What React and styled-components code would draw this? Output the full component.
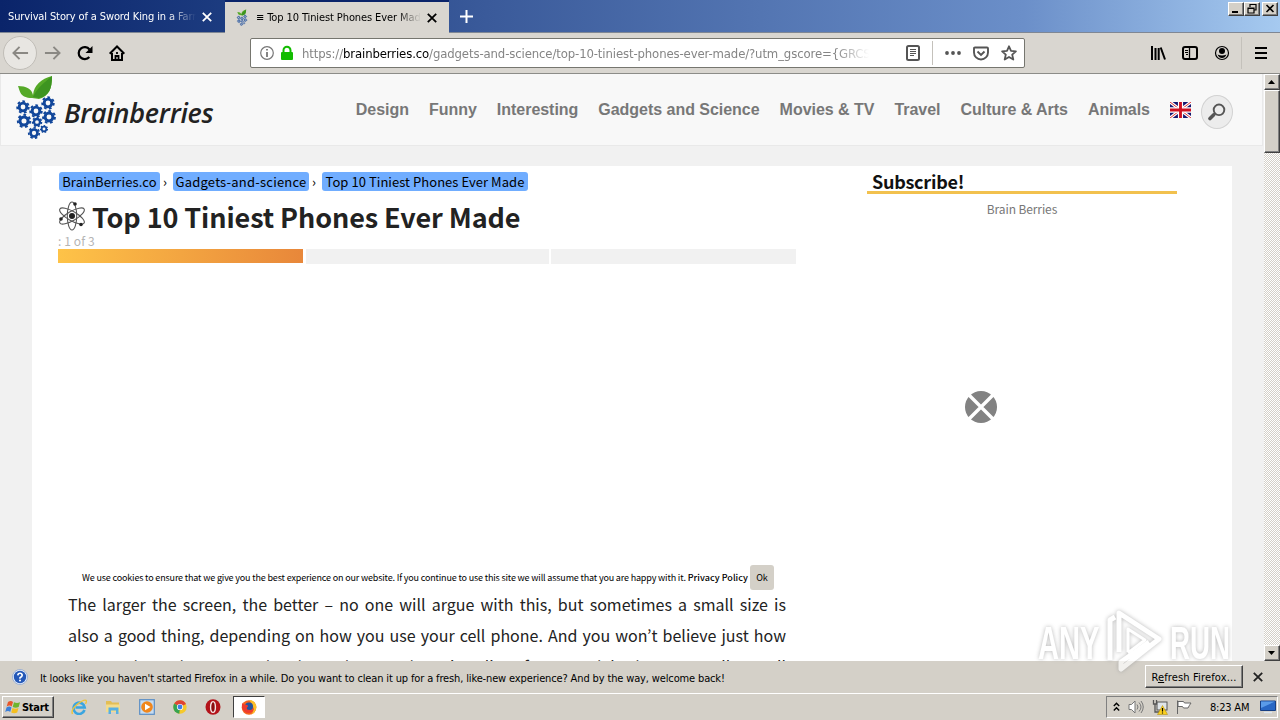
import React from "react";
import styled, { createGlobalStyle, css } from "styled-components";

const ui = '"DejaVu Sans Condensed", "DejaVu Sans", Tahoma, sans-serif';
const body = '"Noto Sans CJK JP", "Noto Sans", sans-serif';

const Global = createGlobalStyle`
  * { box-sizing: border-box; }
  html, body { margin: 0; padding: 0; overflow: hidden; }
  svg { display: block; flex: none; }
`;

const Screen = styled.div`
  position: relative;
  width: 1280px;
  height: 720px;
  display: flex;
  flex-direction: column;
  overflow: hidden;
  background: #f1f1f1;
  font-family: ${ui};
  color: #000;
`;

const Line = styled.span`
  white-space: nowrap;
  font-size: ${(p) => p.$size}px;
  letter-spacing: ${(p) => p.$track || 0}px;
`;

/* ---------- browser chrome ---------- */

const TitleBar = styled.div`
  height: 33px;
  flex: none;
  display: flex;
  align-items: stretch;
  border-bottom: 1px solid #7f8794;
  background: linear-gradient(90deg, #0a246a 0%, #1f3f83 20%, #3a5a9a 38%, #6b8fc9 80%, #a6caf0 100%);
`;

const Tab = styled.div`
  width: ${(p) => p.$width}px;
  display: flex;
  align-items: center;
  padding: 1px 13px 0 8px;
  color: #fff;
  ${(p) =>
    p.$active &&
    css`
      height: 33px;
      padding: 0 12px 0 10px;
      border-top: 2px solid #0a246a;
      background: #d9d6d0;
      color: #000;
    `}
`;

const TabLabel = styled.div`
  flex: 1;
  overflow: hidden;
  display: flex;
  margin-left: ${(p) => p.$indent || 0}px;
  margin-right: 6px;
  mask-image: linear-gradient(90deg, #000 85%, transparent 100%);
`;

const NewTab = styled.div`
  flex: 1;
  display: flex;
  align-items: center;
  padding-left: 10px;
`;

const WindowButtons = styled.div`
  display: flex;
  align-items: flex-start;
  padding: 2px 2px 0 0;
`;

const raised = css`
  border: 1px solid;
  border-color: #fff #404040 #404040 #fff;
  box-shadow: inset -1px -1px 0 #808080;
  background: #d4d0c8;
`;

const WinButton = styled.div`
  width: 16px;
  height: 14px;
  margin-left: ${(p) => p.$gap || 0}px;
  ${raised}
`;

const ToolBar = styled.div`
  height: 41px;
  flex: none;
  display: flex;
  align-items: center;
  padding: 0 13px 0 3px;
  border-bottom: 1px solid #8c8c88;
  background: #d9d6d0;
`;

const BackButton = styled.div`
  width: 34px;
  height: 34px;
  display: grid;
  place-items: center;
  border: 1px solid #c0bdb7;
  border-radius: 50%;
  background: #e8e6e2;
`;

const NavIcons = styled.div`
  display: flex;
  align-items: center;
  gap: 16px;
  width: 213px;
  padding-left: 7px;
`;

const UrlBar = styled.div`
  width: 775px;
  height: 30px;
  display: flex;
  align-items: center;
  padding: 0 5px 0 8px;
  border: 1px solid #76766f;
  border-radius: 2px;
  background: #fff;
`;

const UrlText = styled.div`
  width: 567px;
  margin: 0 37px 0 8px;
  overflow: hidden;
  display: flex;
  color: #858585;
  mask-image: linear-gradient(90deg, #000 94%, transparent 100%);
  b { font-weight: normal; color: #000; }
`;

const UrlActions = styled.div`
  display: flex;
  align-items: center;
  gap: 12px;
`;

const Rule = styled.div`
  width: 1px;
  height: ${(p) => p.$height}px;
  background: #c4c1bb;
`;

const RightTools = styled.div`
  margin-left: auto;
  display: flex;
  align-items: center;
  gap: 16px;
`;

const MenuTool = styled.div`
  margin-left: -5px;
  display: flex;
  align-items: center;
  gap: 13px;
`;

/* ---------- site ---------- */

const Viewport = styled.div`
  height: 587px;
  flex: none;
  display: flex;
  overflow: hidden;
`;

const Site = styled.div`
  width: 1264px;
  height: 587px;
  overflow: hidden;
  font-family: ${body};
`;

const SiteHeader = styled.header`
  width: 1263px;
  height: 72px;
  display: flex;
  align-items: center;
  padding: 0 29px 0 14px;
  border: 1px solid #e9e9e9;
  border-top: 0;
  background: #f8f8f8;
`;

const Brand = styled.div`
  display: flex;
  align-items: center;
  gap: 7px;
  margin-top: -5px;
  span {
    margin-top: 12px;
    font: italic 600 27px/32px "Open Sans", sans-serif;
    letter-spacing: -0.25px;
    color: #222;
  }
`;

const SiteNav = styled.nav`
  margin-left: auto;
  display: flex;
  align-items: center;
  gap: 20px;
  padding-top: 1px;
  font: bold 16px/20px "Liberation Sans", Arial, sans-serif;
  letter-spacing: -0.03px;
  color: #777;
  white-space: nowrap;
`;

const SearchButton = styled.div`
  width: 32px;
  height: 34px;
  margin-left: -10px;
  margin-top: 3px;
  display: grid;
  place-items: center;
  border: 1px solid #d2d2d2;
  border-radius: 50%;
  background: #ececec;
`;

const Sheet = styled.div`
  width: 1200px;
  height: 530px;
  margin: 20px 0 0 32px;
  display: flex;
  background: #fff;
`;

const Article = styled.main`
  width: 809px;
  padding: 6px 0 0 26px;
`;

const Crumbs = styled.div`
  display: flex;
  align-items: center;
  height: 19px;
  padding-left: 1px;
  font-size: 13px;
  line-height: 19px;
  letter-spacing: 0.08px;
  white-space: nowrap;
`;

const Crumb = styled.span`
  width: ${(p) => p.$width}px;
  height: 19px;
  line-height: 20px;
  text-align: center;
  border-radius: 3px;
  background: #70adff;
  letter-spacing: ${(p) => p.$track || 0}px;
`;

const CrumbArrow = styled.span`
  width: 13px;
  padding-left: 3px;
`;

const Title = styled.h1`
  display: flex;
  align-items: center;
  gap: 6px;
  height: 36px;
  margin: 7px 0 0;
  font-size: 27px;
  font-weight: 700;
  line-height: 36px;
  letter-spacing: -0.1px;
  color: #222;
  white-space: nowrap;
  span { padding-top: 2px; }
`;

const Counter = styled.div`
  height: 15px;
  font-size: 12px;
  line-height: 14px;
  letter-spacing: 0.1px;
  color: #b5b5b5;
`;

const Progress = styled.div`
  display: grid;
  grid-template-columns: 245px 243px 245px;
  column-gap: 2.5px;
  width: 738px;
  height: 15px;
`;

const Step = styled.div`
  height: ${(p) => (p.$done ? 14 : 15)}px;
  background: ${(p) => (p.$done ? "linear-gradient(90deg, #fec348, #e8873a)" : "#f1f1f1")};
`;

const Cookie = styled.div`
  display: flex;
  align-items: center;
  height: 25px;
  margin: 301px 0 0 24px;
  font-size: 9px;
  white-space: nowrap;
  b { font-weight: 500; letter-spacing: 0.05px; }
`;

const OkButton = styled.span`
  width: 24px;
  height: 25px;
  margin-left: 2px;
  line-height: 25px;
  text-align: center;
  border-radius: 3px;
  background: #d4d0c8;
`;

const Copy = styled.div`
  width: 718px;
  margin: -1px 0 0 10px;
  color: #222;
  font-size: 16px;
  line-height: 31px;
`;

const CopyLine = styled.div`
  height: 31px;
  white-space: nowrap;
  text-align: justify;
  text-align-last: justify;
`;

const Sidebar = styled.aside`
  width: 340px;
  padding: 5px 0 0 26px;
`;

const SideTitle = styled.h2`
  width: 310px;
  height: 23px;
  margin: 0;
  padding-left: 5px;
  border-bottom: 3px solid #f2c14e;
  font-size: 18px;
  line-height: 21px;
  letter-spacing: -0.25px;
  color: #111;
`;

const SideText = styled.div`
  width: 310px;
  margin-top: 6px;
  text-align: center;
  font-size: 12px;
  line-height: 17px;
  height: 18px;
  letter-spacing: -0.1px;
  color: #777;
`;

const Blocked = styled.div`
  margin: 173px 0 0 98px;
`;

/* ---------- scroll bar ---------- */

const ScrollBar = styled.div`
  width: 16px;
  display: flex;
  flex-direction: column;
  background: repeating-conic-gradient(#d4d0c8 0 25%, #fff 0 50%) 0 0 / 2px 2px;
`;

const ScrollButton = styled.div`
  height: 16px;
  display: grid;
  place-items: center;
  margin-top: ${(p) => (p.$end ? "auto" : 0)};
  ${raised}
`;

const Thumb = styled.div`
  height: 63px;
  ${raised}
`;

/* ---------- bottom bars ---------- */

const Notice = styled.div`
  height: 32px;
  flex: none;
  display: flex;
  align-items: center;
  padding: 0 17px 0 12px;
  background: #d4d0c8;
`;

const NoticeText = styled.div`
  flex: 1;
  padding: 0 0 2px 12px;
`;

const RefreshButton = styled.button`
  width: 98px;
  height: 23px;
  margin: 0 10px 2px 0;
  padding: 0;
  font-family: ${ui};
  ${raised}
`;

const TaskBar = styled.div`
  height: 27px;
  flex: none;
  display: flex;
  align-items: center;
  padding: 0 2px;
  border-top: 1px solid #fff;
  background: #d4d0c8;
`;

const StartButton = styled.div`
  width: 52px;
  height: 22px;
  display: flex;
  align-items: center;
  gap: 1px;
  padding-left: 2px;
  font-weight: bold;
  ${raised}
`;

const QuickLaunch = styled.div`
  display: flex;
  align-items: center;
  gap: 18px;
  margin-left: 17px;
`;

const ActiveTask = styled.div`
  width: 32px;
  height: 22px;
  margin-left: 12px;
  display: grid;
  place-items: center;
  border: 1px solid;
  border-color: #404040 #fff #fff #404040;
  background: #fff;
`;

const Tray = styled.div`
  width: 172px;
  height: 22px;
  margin-left: auto;
  display: flex;
  align-items: center;
  padding: 0 1px 0 6px;
  border: 1px solid;
  border-color: #808080 #fff #fff #808080;
`;

const TrayIcons = styled.div`
  display: flex;
  align-items: center;
  gap: 8px;
  width: 97px;
`;

const Watermark = styled.div`
  position: absolute;
  left: 1038px;
  top: 607px;
  width: 194px;
  height: 68px;
  display: flex;
  align-items: center;
  justify-content: space-between;
  opacity: 0.7;
  filter: drop-shadow(0 0 2px #999);
`;

const WatermarkWord = styled.span`
  display: block;
  width: 62px;
  margin-top: 4px;
  font: bold 47px/44px "Liberation Sans", Arial, sans-serif;
  color: #fff;
  transform: scaleX(${(p) => p.$stretch});
  transform-origin: 0 50%;
`;

/* ---------- drawings ---------- */

const Cross = ({ size = 10, color, w = 2 }) => (
  <svg width={size} height={size} viewBox="0 0 10 10" stroke={color} strokeWidth={w} fill="none">
    <path d="M.8.8 9.2 9.2M9.2.8.8 9.2" />
  </svg>
);

const gears = [
  [8, 33, 6.6], [21, 37, 6.6], [33, 29, 6.6], [9, 47, 7], [34, 43, 6.8], [22, 48, 5.2], [29, 55, 4], [19, 59, 6],
];

const Berry = ({ w, h }) => (
  <svg width={w} height={h} viewBox="0 0 42 66">
    <path d="M17 24C5 24 5 17 3 12c8 0 14 3 15 9 1-10 8-16 19-19 0 13-3 20-13 23z" fill="#55a928" />
    <path d="M18 23C22 14 29 9 37 2c0 13-3 20-13 22z" fill="#3d9420" />
    {gears.map(([x, y, r]) => (
      <g key={x + "-" + y} fill="none" stroke="#12479b">
        <circle cx={x} cy={y} r={r * 0.58} strokeWidth={r * 0.44} />
        <circle cx={x} cy={y} r={r * 0.88} strokeWidth={r * 0.28} strokeDasharray={`${r * 0.395} ${r * 0.395}`} />
      </g>
    ))}
  </svg>
);

const Arrow = ({ flip }) => (
  <svg width="17" height="16" viewBox="0 0 18 16" fill="none" stroke="#8a8883" strokeWidth="2">
    <path d={flip ? "M1 8h15M10 1.5 16.500 8 10 14.500" : "M17 8H2M8 1.500 1.500 8 8 14.500"} />
  </svg>
);

const Reload = () => (
  <svg width="16" height="16" viewBox="0 0 16 16">
    <path d="M12.300 12A6 6 0 1 1 12.500 4.500" fill="none" stroke="#000" strokeWidth="2.200" />
    <path d="M15.500 1v7h-7z" fill="#000" />
  </svg>
);

const Home = () => (
  <svg width="16" height="16" viewBox="0 0 16 16" fill="none" stroke="#000" strokeWidth="2">
    <path d="M.7 8.700 8 1.500l7.300 7.200M3 8v7h10V8" />
    <path d="M6.500 15v-4h3v4M8 7v2" strokeWidth="1.800" />
  </svg>
);

const InfoLock = () => (
  <svg width="35" height="16" viewBox="0 0 35 16">
    <circle cx="8" cy="8" r="6.300" fill="none" stroke="#777" strokeWidth="1.200" />
    <path d="M7.200 4h1.600v1.500H7.200zM7.200 7h1.600v5H7.200z" fill="#666" />
    <path d="M24.500 8V5.200a3.500 3.500 0 0 1 7 0V8" fill="none" stroke="#12bc00" strokeWidth="2" />
    <rect x="22" y="7" width="12" height="8" rx="1" fill="#12bc00" />
  </svg>
);

const Reader = () => (
  <svg width="14" height="16" viewBox="0 0 14 16" fill="none" stroke="#555">
    <rect x="1" y="1" width="12" height="14" rx="1.500" strokeWidth="2" />
    <path d="M4 4.500h6M4 6.500h6M4 8.500h6M4 10.500h4" />
  </svg>
);

const Dots = () => (
  <svg width="16" height="4" viewBox="0 0 16 4" fill="#555">
    <circle cx="2" cy="2" r="1.900" /><circle cx="8" cy="2" r="1.900" /><circle cx="14" cy="2" r="1.900" />
  </svg>
);

const Pocket = () => (
  <svg width="16" height="15" viewBox="0 0 16 15" fill="none" stroke="#555" strokeWidth="1.900">
    <path d="M2 1.500h12q1 0 1 1V6.500a7 7 0 0 1-14 0V2.500q0-1 1-1z" />
    <path d="M4.500 5.500 8 9l3.500-3.500" />
  </svg>
);

const Star = () => (
  <svg width="16" height="16" viewBox="0 0 16 16" fill="none" stroke="#555" strokeWidth="1.800" strokeLinejoin="round">
    <path d="m8 1.300 2 4.500 4.900.5-3.700 3.300 1.100 4.900L8 12l-4.300 2.500 1.100-4.900L1.100 6.300 6 5.800z" />
  </svg>
);

const Library = () => (
  <svg width="16" height="16" viewBox="0 0 16 16" stroke="#000" strokeWidth="2">
    <path d="M2 1v14M5.500 3v12M8.700 3v12M10.700 2.500 15 14.500" />
  </svg>
);

const Panels = () => (
  <svg width="16" height="16" viewBox="0 0 16 16" fill="none" stroke="#000">
    <rect x="1" y="2" width="14" height="12" rx="2" strokeWidth="2" />
    <path d="M7.500 2v12" strokeWidth="1.300" /><path d="M3 5.500h3M3 7.500h3M4 9.500h2" />
  </svg>
);

const Account = () => (
  <svg width="16" height="16" viewBox="0 0 16 16">
    <circle cx="8" cy="8" r="6.500" fill="none" stroke="#000" strokeWidth="1.200" />
    <circle cx="8" cy="6" r="3" /><path d="M3.500 9.500Q8 11.500 12.500 9.500 11 13 8 13T3.500 9.500z" />
  </svg>
);

const Menu = () => (
  <svg width="12" height="12" viewBox="0 0 12 12" stroke="#000" strokeWidth="2">
    <path d="M0 1h12M0 6h12M0 11h12" />
  </svg>
);

const Flag = () => (
  <svg width="21" height="16" viewBox="0 0 22 16" preserveAspectRatio="none">
    <rect width="22" height="16" fill="#16166f" />
    <path d="M0 0l22 16M22 0 0 16" stroke="#fff" strokeWidth="3.200" />
    <path d="M0 0l22 16M22 0 0 16" stroke="#d33" strokeWidth="1" />
    <path d="M11 0v16M0 8h22" stroke="#fff" strokeWidth="5.400" />
    <path d="M11 0v16M0 8h22" stroke="#cf1020" strokeWidth="3" />
  </svg>
);

const Magnifier = () => (
  <svg width="18" height="18" viewBox="0 0 18 18" fill="none" stroke="#555">
    <circle cx="11" cy="6.800" r="5.300" strokeWidth="1.900" />
    <path d="M7 10.500 5.500 12" strokeWidth="2" /><path d="M5.500 12 2 15.500" strokeWidth="3.600" strokeLinecap="round" />
  </svg>
);

const Atom = () => (
  <svg width="28" height="30" viewBox="0 0 28 30" fill="none" stroke="#555" strokeWidth="1.100">
    {[0, 60, 120].map((a) => (
      <ellipse key={a} cx="14" cy="15" rx="4.700" ry="14" transform={`rotate(${a} 14 15)`} />
    ))}
    <g fill="#222" stroke="none">
      <circle cx="14" cy="15" r="3" /><circle cx="17" cy="3" r="1.800" />
      <circle cx="3" cy="18" r="1.800" /><circle cx="23" cy="23.500" r="1.800" />
    </g>
  </svg>
);

const BlockedIcon = () => (
  <svg width="32" height="32" viewBox="0 0 32 32">
    <circle cx="16" cy="16" r="16" fill="#828282" />
    <path d="M4 4l24 24M28 4 4 28" stroke="#fff" strokeWidth="3.400" />
  </svg>
);

const Triangle = ({ down }) => (
  <svg width="8" height="4" viewBox="0 0 8 4"><path d={down ? "M0 0h7L3.500 4z" : "M0 4h7L3.500 0z"} /></svg>
);

const WinGlyph = ({ d, w = 2 }) => (
  <svg width="14" height="12" viewBox="0 0 14 12" fill="none" stroke="#000" strokeWidth={w}><path d={d} /></svg>
);

const Help = () => (
  <svg width="16" height="16" viewBox="0 0 16 16">
    <circle cx="8" cy="8" r="7.500" fill="#e8effb" stroke="#8ba4cf" strokeWidth=".8" />
    <circle cx="8" cy="8" r="6.200" fill="#2458b8" />
    <path d="M5.800 6.300Q6 4.300 8 4.300t2.200 1.900Q10.200 7.500 8 8.700v1" fill="none" stroke="#fff" strokeWidth="1.600" />
    <circle cx="8" cy="11.500" r="1" fill="#fff" />
  </svg>
);

const WindowsLogo = () => (
  <svg width="16" height="16" viewBox="0 0 16 16">
    <path d="M3 3q3-2 5 0L6.700 7.500q-2-2-5 0z" fill="#e8562a" />
    <path d="M9 3.300q3 1.500 6 0L13.700 8q-3 1.500-6 0z" fill="#6fb52c" />
    <path d="M1.500 8.500q3-2 5 0L5.200 13q-2-2-5 0z" fill="#3b7fd9" />
    <path d="M7.500 9q3 1.500 6 0l-1.300 4.500q-3 1.500-6 0z" fill="#f5bf1f" />
  </svg>
);

const Explorer = () => (
  <svg width="16" height="16" viewBox="0 0 16 16" fill="none">
    <path d="M13.500 11A5.600 5.600 0 1 1 13.700 8.500H4.500" stroke="#3aa5e0" strokeWidth="2.600" />
    <path d="M1.500 15Q-.5 11 6 5.500 13 0 15 1.300q1 1-.5 3.500" stroke="#eec43c" strokeWidth="1.400" />
  </svg>
);

const Folder = () => (
  <svg width="16" height="16" viewBox="0 0 16 16">
    <path d="M1 2h5l1 1.500h7V13H1z" fill="#e3be55" /><path d="M1 5.500h14V13H1z" fill="#f4dc8c" />
    <path d="M3.500 15V8.500h10V15H11v-3.500H6V15z" fill="#58b0e2" />
  </svg>
);

const Player = () => (
  <svg width="16" height="16" viewBox="0 0 16 16">
    <rect x=".7" y=".7" width="14.600" height="14.600" fill="#c6dcf1" stroke="#5a8ec5" strokeWidth="1.200" />
    <circle cx="8" cy="8" r="5.800" fill="#f0861c" /><path d="M6 4.700 11.500 8 6 11.300z" fill="#fff" />
  </svg>
);

const Chrome = () => (
  <svg width="14" height="14" viewBox="0 0 14 14">
    <circle cx="7" cy="7" r="6.700" fill="#f5c92c" />
    <path d="M7 7 1.200 3.600A6.700 6.700 0 0 1 13 4z" fill="#df4436" />
    <path d="M7 7 1.200 3.600A6.700 6.700 0 0 0 6.300 13.700z" fill="#37a352" />
    <circle cx="7" cy="7" r="3.100" fill="#fff" /><circle cx="7" cy="7" r="2.400" fill="#3f7fe6" />
  </svg>
);

const Opera = () => (
  <svg width="16" height="16" viewBox="0 0 16 16">
    <ellipse cx="8" cy="8" rx="7.500" ry="7.700" fill="#b3131a" />
    <ellipse cx="8" cy="8" rx="2.400" ry="5.400" fill="#8b0c10" stroke="#f5e6e6" strokeWidth="1.400" />
  </svg>
);

const Firefox = () => (
  <svg width="16" height="16" viewBox="0 0 16 16">
    <circle cx="8" cy="8.500" r="7.300" fill="#f4631e" />
    <path d="M8 1q6 0 7.300 6Q16 13 10 15.500q4-4 2-8Q10 3 8 1z" fill="#fbc02a" />
    <circle cx="8" cy="7.500" r="4" fill="#24549f" />
    <path d="M1 4q2 2 5 2 2 1 0 2.500Q5 11 9 11q3 0 4-2-1 5-5.500 5T1 9z" fill="#ee3b2d" />
  </svg>
);

const TrayDrawings = () => (
  <>
    <svg width="7" height="10" viewBox="0 0 7 10" fill="none" stroke="#000" strokeWidth="1.400">
      <path d="M.8 4 3.500 1.300 6.200 4M.8 8.500 3.500 5.800 6.200 8.500" />
    </svg>
    <svg width="16" height="16" viewBox="0 0 16 16" fill="none" stroke="#777">
      <path d="M1 5.500h2.500L7 2v12l-3.500-3.500H1z" fill="#fff" />
      <path d="M9 5.500q2 2.500 0 5M11 3.500q4 4.500 0 9M13 2q4.500 6 0 12" />
    </svg>
    <svg width="16" height="16" viewBox="0 0 16 16">
      <rect x="5" y="3" width="10" height="8" fill="#dfe4e8" stroke="#555" />
      <path d="M1.500 1v4h3V1M3 5v8h5" fill="none" stroke="#555" strokeWidth="1.300" />
      <path d="M10.500 6.500 15.500 15.500H5.500z" fill="#fbd01e" stroke="#a98500" strokeWidth=".5" />
      <path d="M10.500 9v3.500M10.500 13.500v1" stroke="#000" strokeWidth="1.200" />
    </svg>
    <svg width="16" height="16" viewBox="0 0 16 16" fill="#fff" stroke="#666">
      <path d="M1.500 15V1.500M2 2.500h5.500l1 1.500H15q-1.500 2-3 5H7.500l-1-1.500H2z" />
    </svg>
  </>
);

const Desktop = () => (
  <svg width="16" height="14" viewBox="0 0 16 14">
    <path d="M.5 1h15v9.500H.5z" fill="#2867c4" stroke="#173f83" /><path d="M1 1.500h14L1 8z" fill="#5a9be8" />
    <path d="M4 12.500h8" stroke="#dde6ef" strokeWidth="1.500" />
  </svg>
);

const PlayMark = () => (
  <svg width="56" height="66" viewBox="0 0 56 66" fill="none" stroke="#fff" strokeWidth="5" strokeLinejoin="round">
    <path d="M3 52V12l5-3" /><path d="M12 44V5L52 31 14 61v-7l28-20" /><path d="M21 44V21l17 11-17 13" strokeWidth="3" />
  </svg>
);

export default function App() {
  return (
    <Screen>
      <Global />
      <TitleBar>
        <Tab $width={225}>
          <TabLabel><Line $size={11} $track={-0.12}>Survival Story of a Sword King in a Farm</Line></TabLabel>
          <Cross color="#fff" w={1.8} />
        </Tab>
        <Tab $width={224} $active>
          <Berry w={14} h={17} />
          <TabLabel $indent={7}><Line $size={11} $track={-0.1}>≡ Top 10 Tiniest Phones Ever Made</Line></TabLabel>
          <Cross color="#000" w={1.8} />
        </Tab>
        <NewTab>
          <svg width="15" height="15" viewBox="0 0 15 15" stroke="#fff" strokeWidth="2"><path d="M7.500 1v13M1 7.500h13" /></svg>
        </NewTab>
        <WindowButtons>
          <WinButton><WinGlyph d="M3 9h6" /></WinButton>
          <WinButton><WinGlyph w={1.2} d="M5 4V1.500h6V7H9M3 5h6v5H3zM3 5.500h6" /></WinButton>
          <WinButton $gap={2}><WinGlyph w={1.6} d="M3.500 2 10.500 9M10.500 2 3.500 9" /></WinButton>
        </WindowButtons>
      </TitleBar>

      <ToolBar>
        <BackButton><Arrow /></BackButton>
        <NavIcons><Arrow flip /><Reload /><Home /></NavIcons>
        <UrlBar>
          <InfoLock />
          <UrlText>
            <Line $size={13} $track={-0.12}>
              https://<b>brainberries.co</b>/gadgets-and-science/top-10-tiniest-phones-ever-made/?utm_gscore={"{GRCS"}
            </Line>
          </UrlText>
          <UrlActions><Reader /><Rule $height={24} /><Dots /><Pocket /><Star /></UrlActions>
        </UrlBar>
        <RightTools>
          <Library /><Panels /><Account />
          <MenuTool><Rule $height={32} /><Menu /></MenuTool>
        </RightTools>
      </ToolBar>

      <Viewport>
        <Site>
          <SiteHeader>
            <Brand><Berry w={42} h={66} /><span>Brainberries</span></Brand>
            <SiteNav>
              {["Design", "Funny", "Interesting", "Gadgets and Science", "Movies & TV", "Travel", "Culture & Arts", "Animals"].map((t) => (
                <span key={t}>{t}</span>
              ))}
              <Flag />
              <SearchButton><Magnifier /></SearchButton>
            </SiteNav>
          </SiteHeader>
          <Sheet>
            <Article>
              <Crumbs>
                <Crumb $width={101} $track={0.15}>BrainBerries.co</Crumb><CrumbArrow>›</CrumbArrow>
                <Crumb $width={136} $track={0.22}>Gadgets-and-science</Crumb><CrumbArrow>›</CrumbArrow>
                <Crumb $width={206} $track={0.05}>Top 10 Tiniest Phones Ever Made</Crumb>
              </Crumbs>
              <Title><Atom /><span>Top 10 Tiniest Phones Ever Made</span></Title>
              <Counter>: 1 of 3</Counter>
              <Progress><Step $done /><Step /><Step /></Progress>
              <Cookie>
                <Line $size={9} $track={-0.16}>
                  We use cookies to ensure that we give you the best experience on our website. If you continue to use this site we will assume that you are happy with it. <b>Privacy Policy</b>
                </Line>
                <OkButton>Ok</OkButton>
              </Cookie>
              <Copy>
                <CopyLine>The larger the screen, the better – no one will argue with this, but sometimes a small size is</CopyLine>
                <CopyLine>also a good thing, depending on how you use your cell phone. And you won’t believe just how</CopyLine>
                <CopyLine>tiny modern phones can be these days, so here is a list of ten models that are really small</CopyLine>
              </Copy>
            </Article>
            <Sidebar>
              <SideTitle>Subscribe!</SideTitle>
              <SideText>Brain Berries</SideText>
              <Blocked><BlockedIcon /></Blocked>
            </Sidebar>
          </Sheet>
        </Site>
        <ScrollBar>
          <ScrollButton><Triangle /></ScrollButton>
          <Thumb />
          <ScrollButton $end><Triangle down /></ScrollButton>
        </ScrollBar>
      </Viewport>

      <Notice>
        <Help />
        <NoticeText>
          <Line $size={11} $track={-0.14}>
            It looks like you haven't started Firefox in a while. Do you want to clean it up for a fresh, like-new experience? And by the way, welcome back!
          </Line>
        </NoticeText>
        <RefreshButton><Line $size={11} $track={0.15}>R<u>e</u>fresh Firefox...</Line></RefreshButton>
        <Cross color="#222" w={1.8} />
      </Notice>

      <TaskBar>
        <StartButton><WindowsLogo /><Line $size={11} $track={-0.3}>Start</Line></StartButton>
        <QuickLaunch><Explorer /><Folder /><Player /><Chrome /><Opera /></QuickLaunch>
        <ActiveTask><Firefox /></ActiveTask>
        <Tray>
          <TrayIcons><TrayDrawings /></TrayIcons>
          <Line $size={11} $track={-0.2}>8:23 AM</Line>
          <RightTools><Desktop /></RightTools>
        </Tray>
      </TaskBar>

      <Watermark>
        <WatermarkWord $stretch={0.62}>ANY</WatermarkWord>
        <PlayMark />
        <WatermarkWord $stretch={0.59}>RUN</WatermarkWord>
      </Watermark>
    </Screen>
  );
}
